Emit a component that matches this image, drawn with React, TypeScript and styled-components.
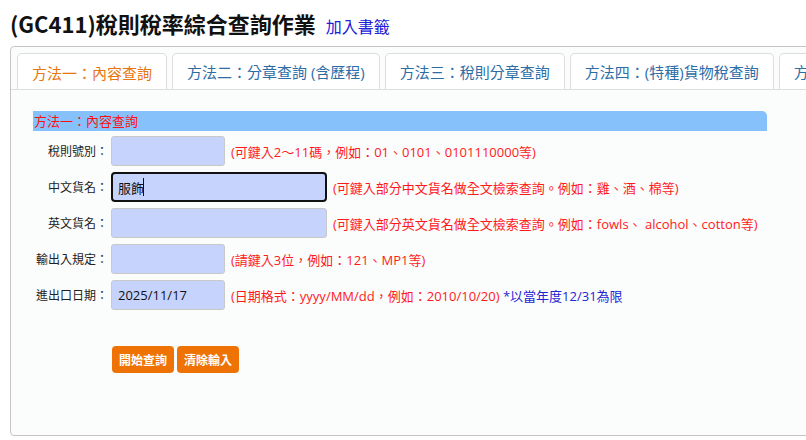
import React from "react";
import styled, { createGlobalStyle } from "styled-components";

const GlobalStyle = createGlobalStyle`
  html, body {
    margin: 0;
    padding: 0;
    background: #ffffff;
    overflow: hidden;
    font-family: "Open Sans", "Noto Sans CJK TC", sans-serif;
  }
`;

const Page = styled.div`
  width: 806px;
  height: 440px;
  overflow: hidden;
`;

const Header = styled.div`
  display: flex;
  align-items: baseline;
  gap: 10px;
  padding: 8px 10px 0;
  height: 30px;
`;

const Title = styled.h1`
  margin: 0;
  font-family: "Noto Sans CJK TC", sans-serif;
  font-size: 22px;
  line-height: 30px;
  font-weight: 600;
  color: #111;
  white-space: nowrap;
`;

const Bookmark = styled.a`
  font-family: "Noto Sans CJK TC", sans-serif;
  font-size: 16px;
  color: #2020d8;
  text-decoration: none;
  white-space: nowrap;
`;

const Panel = styled.div`
  margin: 8px 0 0 10px;
  width: 830px;
  height: 382px;
  border: 1px solid #c6c6c6;
  border-radius: 4px;
  background: #fbfcfc;
  box-sizing: content-box;
  padding-top: 6px;
`;

const TabList = styled.div`
  display: flex;
  gap: 5px;
  padding-left: 6px;
  border-bottom: 1px solid #dddddd;
  height: 36px;
  overflow: hidden;
`;

const Tab = styled.div<{ $active?: boolean }>`
  box-sizing: border-box;
  padding: 0 14px;
  display: flex;
  align-items: center;
  flex-shrink: 0;
  border: 1px solid #dddddd;
  border-bottom: none;
  border-radius: 5px 5px 0 0;
  background: #ffffff;
  font-size: 15px;
  white-space: nowrap;
  color: ${(p) => (p.$active ? "#e8760e" : "#2d6da6")};
  height: ${(p) => (p.$active ? "37px" : "36px")};
`;

const Content = styled.div`
  padding: 21px 0 0 22px;
`;

const SectionBar = styled.div`
  width: 734px;
  height: 20px;
  line-height: 20px;
  background: #86c1fb;
  border-radius: 0 5px 0 0;
  color: #ff1010;
  font-size: 13px;
  padding-left: 1px;
  box-sizing: border-box;
`;

const Form = styled.div`
  display: flex;
  flex-direction: column;
  gap: 6px;
  margin-top: 5px;
`;

const Row = styled.div`
  display: flex;
  align-items: center;
  height: 30px;
`;

const Label = styled.label`
  width: 75px;
  margin-right: 3px;
  text-align: right;
  font-size: 12px;
  color: #222;
  white-space: nowrap;
`;

const InputWrap = styled.div`
  position: relative;
  display: flex;
`;

const Field = styled.input<{ $wide?: boolean; $focused?: boolean }>`
  width: ${(p) => (p.$wide ? "216px" : "114px")};
  height: 30px;
  box-sizing: border-box;
  background: #c6d4fd;
  border: ${(p) => (p.$focused ? "2px solid #111" : "1px solid #c9c9c9")};
  border-radius: ${(p) => (p.$focused ? "4px" : "3px")};
  padding: 0 0 0 ${(p) => (p.$focused ? "5px" : "6px")};
  font-family: "Open Sans", "Noto Sans CJK TC", sans-serif;
  font-size: 13px;
  color: #111;
  outline: none;
`;

const Caret = styled.span`
  position: absolute;
  left: 32px;
  top: 6px;
  width: 1px;
  height: 18px;
  background: #111;
`;

const Hint = styled.span`
  margin-left: 6px;
  font-size: 13px;
  color: #ff1a1a;
  white-space: nowrap;
`;

const Note = styled.span`
  color: #2424d4;
`;

const Buttons = styled.div`
  display: flex;
  gap: 3px;
  margin-top: 36px;
  padding-left: 79px;
`;

const Button = styled.button`
  height: 27px;
  padding: 0 7px;
  border: none;
  border-radius: 4px;
  background: #ef7304;
  color: #ffffff;
  font-family: "Open Sans", "Noto Sans CJK TC", sans-serif;
  font-size: 12px;
  font-weight: 700;
  cursor: pointer;
`;

const tabs = [
  "方法一：內容查詢",
  "方法二：分章查詢 (含歷程)",
  "方法三：稅則分章查詢",
  "方法四：(特種)貨物稅查詢",
  "方法五：稅則增修訂查詢",
];

export default function App() {
  return (
    <Page>
      <GlobalStyle />
      <Header>
        <Title>(GC411)稅則稅率綜合查詢作業</Title>
        <Bookmark href="#">加入書籤</Bookmark>
      </Header>
      <Panel>
        <TabList>
          {tabs.map((t, i) => (
            <Tab key={t} $active={i === 0}>
              {t}
            </Tab>
          ))}
        </TabList>
        <Content>
          <SectionBar>方法一：內容查詢</SectionBar>
          <Form>
            <Row>
              <Label>稅則號別：</Label>
              <Field />
              <Hint>(可鍵入2～11碼，例如：01、0101、0101110000等)</Hint>
            </Row>
            <Row>
              <Label>中文貨名：</Label>
              <InputWrap>
                <Field $wide $focused defaultValue="服飾" readOnly />
                <Caret />
              </InputWrap>
              <Hint>(可鍵入部分中文貨名做全文檢索查詢。例如：雞、酒、棉等)</Hint>
            </Row>
            <Row>
              <Label>英文貨名：</Label>
              <Field $wide />
              <Hint>(可鍵入部分英文貨名做全文檢索查詢。例如：fowls、 alcohol、cotton等)</Hint>
            </Row>
            <Row>
              <Label>輸出入規定：</Label>
              <Field />
              <Hint>(請鍵入3位，例如：121、MP1等)</Hint>
            </Row>
            <Row>
              <Label>進出口日期：</Label>
              <Field defaultValue="2025/11/17" />
              <Hint>
                (日期格式：yyyy/MM/dd，例如：2010/10/20) <Note>*以當年度12/31為限</Note>
              </Hint>
            </Row>
          </Form>
          <Buttons>
            <Button>開始查詢</Button>
            <Button>清除輸入</Button>
          </Buttons>
        </Content>
      </Panel>
    </Page>
  );
}
